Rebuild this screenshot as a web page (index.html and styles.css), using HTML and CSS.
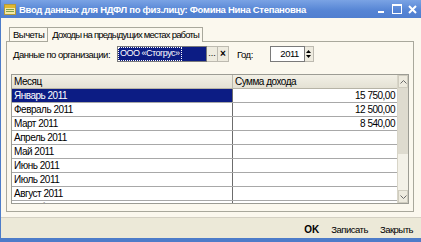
FILE: index.html
```html
<!DOCTYPE html>
<html lang="ru">
<head>
<meta charset="utf-8">
<title>Ввод данных для НДФЛ</title>
<link rel="stylesheet" href="styles.css">
</head>
<body>
<div class="window">
  <div class="titlebar">
    <svg class="app-icon" width="12" height="11" viewBox="0 0 12 11">
      <rect x="0.5" y="0.5" width="11" height="10" fill="#f3e9a8" stroke="#b59a3a"/>
      <rect x="1" y="1" width="10" height="3" fill="#e0b830"/>
      <rect x="2" y="5" width="8" height="1" fill="#7fa04a"/>
      <rect x="2" y="7" width="8" height="1" fill="#7fa04a"/>
    </svg>
    <span class="title">Ввод данных для НДФЛ по физ.лицу: Фомина Нина Степановна</span>
    <div class="controls">
      <svg width="9" height="9" viewBox="0 0 9 9"><rect x="1" y="6" width="6" height="2" fill="#fff"/></svg>
      <svg width="10" height="10" viewBox="0 0 10 10"><rect x="0.5" y="0.5" width="9" height="9" fill="none" stroke="#fff"/><rect x="0" y="0" width="10" height="2" fill="#fff"/></svg>
      <svg width="9" height="9" viewBox="0 0 9 9"><path d="M1 1L8 8M8 1L1 8" stroke="#fff" stroke-width="2"/></svg>
    </div>
  </div>
  <div class="body">
    <div class="tabs">
      <div class="tab">Вычеты</div>
      <div class="tab active">Доходы на предыдущих местах работы</div>
    </div>
    <div class="panel">
      <div class="form-row">
        <span class="label">Данные по организации:</span>
        <div class="org-field">
          <div class="org-input"><span class="focus">ООО «Стогрус»</span></div>
          <div class="mini-btn">...</div>
          <div class="mini-btn x">×</div>
        </div>
        <span class="label year-label">Год:</span>
        <div class="year-field">
          <div class="year-input">2011</div>
          <div class="spin">
            <svg width="5" height="3" viewBox="0 0 5 3"><path d="M0 3L2.5 0L5 3Z" fill="#000"/></svg>
            <svg width="5" height="3" viewBox="0 0 5 3"><path d="M0 0L2.5 3L5 0Z" fill="#000"/></svg>
          </div>
        </div>
      </div>
      <div class="table">
        <div class="grid">
          <div class="head">
            <div class="cell c1">Месяц</div>
            <div class="cell c2">Сумма дохода</div>
          </div>
          <div class="row"><div class="cell c1 sel">Январь 2011</div><div class="cell c2 num">15 750,00</div></div>
          <div class="row"><div class="cell c1">Февраль 2011</div><div class="cell c2 num">12 500,00</div></div>
          <div class="row"><div class="cell c1">Март 2011</div><div class="cell c2 num">8 540,00</div></div>
          <div class="row"><div class="cell c1">Апрель 2011</div><div class="cell c2 num"></div></div>
          <div class="row"><div class="cell c1">Май 2011</div><div class="cell c2 num"></div></div>
          <div class="row"><div class="cell c1">Июнь 2011</div><div class="cell c2 num"></div></div>
          <div class="row"><div class="cell c1">Июль 2011</div><div class="cell c2 num"></div></div>
          <div class="row"><div class="cell c1">Август 2011</div><div class="cell c2 num"></div></div>
          <div class="row"><div class="cell c1">Сентябрь 2011</div><div class="cell c2 num"></div></div>
        </div>
        <div class="vscroll">
          <div class="arrow"><svg width="7" height="4" viewBox="0 0 7 4"><path d="M0.5 3.5L3.5 0.5L6.5 3.5" fill="none" stroke="#6a6a6a"/></svg></div>
          <div class="thumb"></div>
          <div class="track"></div>
          <div class="arrow"><svg width="7" height="4" viewBox="0 0 7 4"><path d="M0.5 0.5L3.5 3.5L6.5 0.5" fill="none" stroke="#6a6a6a"/></svg></div>
        </div>
      </div>
    </div>
    <div class="footer">
      <span class="fbtn ok">OK</span>
      <span class="fbtn">Записать</span>
      <span class="fbtn">Закрыть</span>
    </div>
  </div>
</div>
</body>
</html>
```

FILE: styles.css
```css
* { box-sizing: border-box; margin: 0; padding: 0; }
html, body { width: 421px; height: 242px; overflow: hidden; }
body {
  font-family: "Liberation Sans", Arial, sans-serif;
  font-size: 10px;
  color: #000;
  background: #fbf8ee;
}
.window {
  display: flex;
  flex-direction: column;
  height: 242px;
  border-left: 1px solid #4d7cc9;
  border-bottom: 4px solid #4d7cc9;
}
.titlebar {
  flex: none;
  height: 18px;
  display: flex;
  align-items: center;
  background: linear-gradient(#7aa3e4, #5584d4 60%, #4f7ecf);
  color: #fff;
  font-weight: bold;
  padding-left: 3px;
}
.app-icon { flex: none; margin-right: 3px; }
.title { white-space: nowrap; font-size: 9.5px; letter-spacing: -0.3px; }
.controls {
  margin-left: auto;
  display: flex;
  align-items: center;
  gap: 6px;
  padding-right: 4px;
}
.body {
  flex: 1;
  display: flex;
  flex-direction: column;
  padding: 9px 7px 0 5px;
}
.tabs {
  display: flex;
  height: 14px;
  padding-left: 3px;
  position: relative;
  z-index: 1;
}
.tab {
  border: 1px solid #a9a89c;
  border-bottom: none;
  padding: 0 3px;
  line-height: 13px;
  font-size: 9.5px;
  letter-spacing: -0.5px;
  background: #fbf8ee;
  white-space: nowrap;
}
.tab.active {
  height: 15px;
  border-left: none;
  padding: 0 3px 0 4px;
  letter-spacing: -0.8px;
}
.panel {
  height: 171px;
  border: 1px solid #a9a89c;
  padding: 4px 4px 0 4px;
  display: flex;
  flex-direction: column;
}
.form-row {
  height: 16px;
  display: flex;
  align-items: center;
}
.label {
  padding-left: 2px;
  width: 106px;
  white-space: nowrap;
  font-size: 9.5px;
  letter-spacing: -0.5px;
}
.org-field { display: flex; height: 16px; }
.org-input {
  width: 90px;
  background: #0c1c84;
  border: 1px solid #7a7a7a;
  padding: 1px;
}
.focus {
  display: inline-block;
  height: 12px;
  line-height: 11px;
  outline: 1px dotted #fff;
  color: #fff;
  padding: 0 1px;
  font-size: 9px;
  letter-spacing: -0.5px;
  white-space: nowrap;
  vertical-align: top;
}
.mini-btn {
  width: 11px;
  height: 16px;
  border: 1px solid #bdbab0;
  border-left: none;
  background: #eeebdf;
  font-size: 9px;
  line-height: 12px;
  text-align: center;
}
.mini-btn.x { font-weight: bold; font-size: 10px; line-height: 13px; }
.year-label { width: auto; padding-left: 8px; margin-right: 17px; }
.year-field { display: flex; height: 16px; }
.year-input {
  width: 35px;
  border: 1px solid #7a7a7a;
  background: #fff;
  text-align: right;
  padding-right: 5px;
  line-height: 14px;
  font-size: 9.5px;
  letter-spacing: -0.5px;
}
.spin {
  width: 9px;
  border: 1px solid #bdbab0;
  border-left: none;
  background: #eeebdf;
  display: flex;
  flex-direction: column;
  justify-content: space-around;
  align-items: center;
  padding: 2px 0;
}
.table {
  margin-top: 12px;
  height: 130px;
  border: 1px solid #9c9c94;
  display: flex;
  background: #fff;
  overflow: hidden;
}
.grid { flex: 1; display: flex; flex-direction: column; }
.head, .row { display: flex; flex: none; height: 14px; }
.head {
  background: linear-gradient(#f2f0e6, #e4e1d4);
  border-bottom: 1px solid #b6b3a6;
}
.row { border-bottom: 1px solid #a8a8a8; }
.cell {
  line-height: 13px;
  padding: 0 2px;
  white-space: nowrap;
  letter-spacing: -0.5px;
}
.c1 { width: 221px; border-right: 1px solid #6c6c6c; }
.head .c1 { border-right: 1px solid #bcb9ac; }
.c2 { flex: 1; }
.num { text-align: right; padding-right: 2px; }
.sel { background: #0c1c84; color: #fff; }
.vscroll {
  width: 11px;
  flex: none;
  display: flex;
  flex-direction: column;
  background: #f3f1e8;
  border-left: 1px solid #d8d5c8;
}
.arrow {
  height: 13px;
  flex: none;
  display: flex;
  align-items: center;
  justify-content: center;
  background: #edeade;
  border: 1px solid #cfccbf;
}
.thumb { height: 66px; background: #dedbcf; flex: none; }
.track { flex: 1; }
.footer {
  margin: 5px -7px 0 -5px;
  flex: 1;
  background: #ece9d8;
  border-top: 1px solid #d4d0c3;
  display: flex;
  align-items: center;
  justify-content: flex-end;
  gap: 12px;
  padding: 2px 8px 0 0;
}
.fbtn { font-size: 9.5px; letter-spacing: -0.5px; }
.fbtn.ok { font-weight: bold; font-size: 10px; letter-spacing: 0; }
```
